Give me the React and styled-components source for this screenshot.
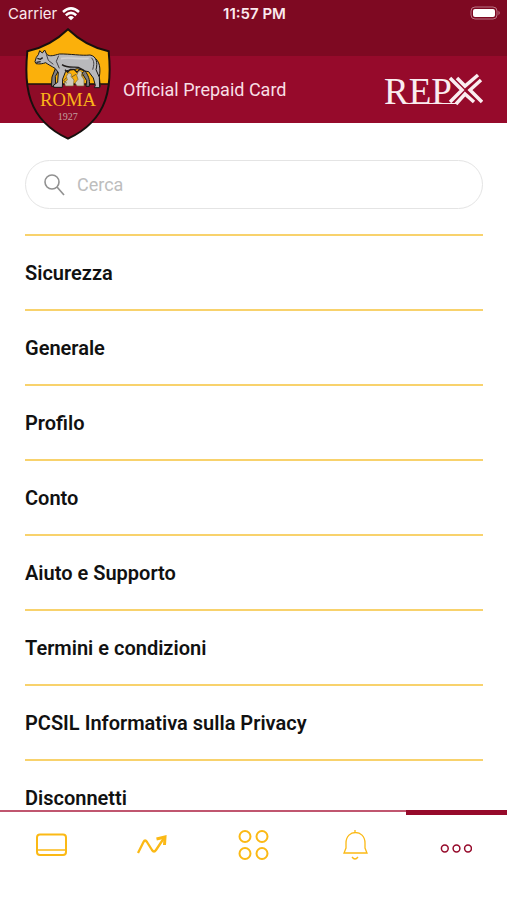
import React from "react";
import styled, { createGlobalStyle } from "styled-components";

const GlobalStyle = createGlobalStyle`
  *, *::before, *::after { box-sizing: border-box; }
  body { margin: 0; background: #fff; font-family: Roboto, "Liberation Sans", sans-serif; }
`;

const gold = "#fbb915";
const crimson = "#960a2b";

const Screen = styled.div`
  display: flex;
  flex-direction: column;
  height: 100vh;
  background: #fff;
`;

const StatusBar = styled.div`
  flex: none;
  display: grid;
  grid-template-columns: 1fr auto 1fr;
  align-items: start;
  height: 56px;
  padding: 4px 6px 4px 8px;
  background: #7e0922;
  color: #fbe9ed;
  font-family: Inter, "Liberation Sans", sans-serif;
  font-size: 15px;
  line-height: 20px;
`;

const Carrier = styled.div`
  display: flex;
  align-items: center;
  gap: 5px;
  svg { display: block; }
`;

const Clock = styled.time`
  font-weight: 600;
`;

const Battery = styled.svg`
  justify-self: end;
  display: block;
  margin-top: 2px;
`;

const Header = styled.header`
  flex: none;
  display: flex;
  align-items: center;
  height: 67px;
  padding: 0 24px 0 25px;
  background: ${crimson};
`;

const CrestSlot = styled.div`
  position: relative;
  z-index: 1;
  align-self: stretch;
  width: 98px;
`;

const Crest = styled.svg`
  position: absolute;
  top: -28px;
  left: 0;
`;

const Title = styled.h1`
  flex: 1;
  margin: 0;
  color: #f8dfe5;
  font-size: 18px;
  font-weight: 400;
  line-height: 24px;
`;

const Content = styled.main`
  flex: 1;
  min-height: 0;
  overflow-y: auto;
  scrollbar-width: none;
  padding: 37px 24px 0 25px;
`;

const SearchBox = styled.label`
  display: flex;
  align-items: center;
  gap: 12px;
  height: 49px;
  margin-bottom: 25px;
  padding: 0 18px;
  border: 1px solid #e4e4e4;
  border-radius: 25px;
  svg { flex: none; }
`;

const SearchInput = styled.input`
  flex: 1;
  min-width: 0;
  padding: 0;
  border: 0;
  outline: 0;
  background: transparent;
  color: #333;
  font-family: inherit;
  font-size: 18px;
  &::placeholder { color: #bdbdbd; opacity: 1; }
`;

const Menu = styled.ul`
  margin: 0;
  padding: 0;
  list-style: none;
`;

const MenuItem = styled.li`
  border-top: 2px solid #f8d26c;
`;

const MenuButton = styled.button`
  display: block;
  width: 100%;
  padding: 25px 0 24px;
  border: 0;
  background: none;
  color: #111;
  font-family: inherit;
  font-size: 20px;
  font-weight: 600;
  line-height: 24px;
  text-align: left;
  cursor: pointer;
`;

const TabBar = styled.nav`
  flex: none;
  display: grid;
  grid-template-columns: repeat(5, 1fr);
  height: 90px;
  border-top: 2px solid #c0566f;
`;

const Tab = styled.button`
  position: relative;
  display: flex;
  justify-content: center;
  align-items: flex-start;
  padding: 15px 0 0;
  border: 0;
  background: none;
  color: ${(p) => (p.$active ? crimson : gold)};
  cursor: pointer;
  &::before {
    content: "";
    display: ${(p) => (p.$active ? "block" : "none")};
    position: absolute;
    top: -2px;
    left: 0;
    right: 0;
    height: 5px;
    background: ${crimson};
  }
`;

function WifiIcon() {
  return (
    <svg width="18" height="14" viewBox="0 0 18 14" fill="none" stroke="#fff" strokeWidth="2.5" aria-hidden="true">
      <path d="M1 5Q9-2.2 17 5" />
      <path d="M3.8 8.2Q9 3.6 14.2 8.2" />
      <path d="M9 13.3 6 10.4Q9 7.8 12 10.4Z" fill="#fff" stroke="none" />
    </svg>
  );
}

function BatteryIcon() {
  return (
    <Battery width="31" height="14" viewBox="0 0 31 14" role="img" aria-label="Battery full">
      <rect x="1" y="1" width="26" height="12" rx="4" fill="none" stroke="#bb7485" />
      <rect x="3" y="3" width="22" height="8" rx="2" fill="#fff" />
      <path d="M28.5 4.8Q31 7 28.5 9.2Z" fill="#bb7485" />
    </Battery>
  );
}

function RomaCrest() {
  const outline = "M204 87C174 116 130 143 82 153C72 253 79 357 204 415C329 357 336 253 326 153C278 143 234 116 204 87Z";
  return (
    <Crest width="86" height="112" viewBox="75 83 258 336" role="img" aria-label="Roma 1927">
      <defs>
        <clipPath id="crest-shape"><path d={outline} /></clipPath>
      </defs>
      <g clipPath="url(#crest-shape)">
        <path fill="#fbb00b" d="M70 80H340V252H70Z" />
        <path fill="#8e0b27" d="M70 252H340V420H70Z" />
        <path stroke="#17100e" strokeWidth="4" d="M70 251H340" />
      </g>
      <path d={outline} fill="none" stroke="#17100e" strokeWidth="6" />
      <g fill="#b9b9bc" stroke="#191714" strokeWidth="3" strokeLinejoin="round">
        <path d="M281 171C300 181 302 206 298 229L301 259H290L286 224Z" />
        <path d="M180 204 166 228 167 258H154L156 230 168 200Z" fill="#817f80" />
        <path d="M105 184 109 171 115 163 119 151 127 158 134 149 140 162C150 170 162 165 178 161C208 160 246 167 270 164C289 167 294 187 288 208L298 231 299 262H283L286 255 280 233 266 214C253 213 243 207 232 205C216 211 206 207 197 213L188 236 187 261H161V254L173 246 175 216 165 204C154 197 145 193 137 187C129 190 119 192 108 190Z" />
        <path d="M255 211C264 225 271 237 268 258H258L260 241 246 218Z" fill="#817f80" />
      </g>
      <path d="M139 162 145 180 160 192M176 166 169 183 178 204M274 172C284 182 282 194 278 208" fill="none" stroke="#444145" strokeWidth="3" />
      <path d="M186 193C202 204 220 199 235 201L252 210M195 208 203 216 211 207 222 207 231 216 239 207M112 174 121 177 128 172M109 186 122 184" fill="none" stroke="#201c1a" strokeWidth="4" />
      <path d="M183 175C207 169 239 178 266 174" fill="none" stroke="#d2d1d2" strokeWidth="5" />
      <g fill="#d0cbbb" stroke="#77602e" strokeWidth="2">
        <path d="M204 219C211 216 217 221 213 228L222 239 220 257H196L193 246 202 239 199 228Z" />
        <path d="M235 213C243 209 249 216 244 224L252 238 252 257H231L225 248 234 237 230 225Z" />
        <path d="M199 232 191 241 200 248M215 230 228 222M245 227 255 220" fill="none" strokeWidth="3" />
      </g>
      <text x="204" y="317" textAnchor="middle" fill="#fbb51a" fontFamily="Liberation Serif, serif" fontSize="56">ROMA</text>
      <text x="203" y="360" textAnchor="middle" fill="#c3a1a0" fontFamily="Liberation Serif, serif" fontSize="30">1927</text>
    </Crest>
  );
}

function RepxLogo() {
  return (
    <svg width="99" height="34" viewBox="0 0 99 34" role="img" aria-label="REPX">
      <text x="0" y="31" fill="#faedf0" fontFamily="Liberation Serif, serif" fontSize="37">REP</text>
      <path d="M24 30.5H73" stroke="#faedf0" strokeWidth="1.2" />
      <g fill="none" stroke="#faedf0" strokeWidth="3.5">
        <path d="M66 5 78 17 66 29" />
        <path d="M73 5 81 13 94 2" />
        <path d="M97 7 86 17 98 29" />
        <path d="M72 31 81 21 90 29" />
      </g>
    </svg>
  );
}

function SearchIcon() {
  return (
    <svg width="21" height="22" viewBox="0 0 21 22" fill="none" stroke="#919191" strokeWidth="1.6" aria-hidden="true">
      <circle cx="8" cy="8" r="7" />
      <path d="m13 13 7 8" />
    </svg>
  );
}

function CardIcon() {
  return (
    <svg width="32" height="36" viewBox="0 0 32 36" fill="none" stroke="currentColor" strokeWidth="2" aria-hidden="true">
      <rect x="2" y="7.5" width="29" height="20.5" rx="3" />
      <path d="M3 23H30" strokeWidth="1.5" />
    </svg>
  );
}

function TrendIcon() {
  return (
    <svg width="32" height="36" viewBox="0 0 32 36" fill="none" stroke="currentColor" strokeWidth="2.3" aria-hidden="true">
      <path d="M2 26 7.5 15Q9 12 11 15L16 23Q18 26 20 23L28 11" />
      <path d="M20.5 12 29 10 28.5 18" strokeWidth="3" />
    </svg>
  );
}

function GridIcon() {
  return (
    <svg width="32" height="36" viewBox="0 0 32 36" fill="none" stroke="currentColor" strokeWidth="2" aria-hidden="true">
      <circle cx="8" cy="9.5" r="5.5" />
      <circle cx="25" cy="9.5" r="5.5" />
      <circle cx="8" cy="26.5" r="5.5" />
      <circle cx="25" cy="26.5" r="5.5" />
    </svg>
  );
}

function BellIcon() {
  return (
    <svg width="32" height="36" viewBox="0 0 32 36" fill="none" stroke="currentColor" strokeWidth="1.3" aria-hidden="true">
      <path d="M16 3V6M7 21V16C7 2 26 2 26 16V21L28 26H5Z" />
      <path d="M13 30Q16 34 19 30" />
    </svg>
  );
}

function MoreIcon() {
  return (
    <svg width="32" height="36" viewBox="0 0 32 36" fill="none" stroke="currentColor" strokeWidth="1.5" aria-hidden="true">
      <circle cx="4.8" cy="21.5" r="3.4" />
      <circle cx="16.5" cy="21.5" r="3.4" />
      <circle cx="28" cy="21.5" r="3.4" />
    </svg>
  );
}

const sections = [
  "Sicurezza",
  "Generale",
  "Profilo",
  "Conto",
  "Aiuto e Supporto",
  "Termini e condizioni",
  "PCSIL Informativa sulla Privacy",
  "Disconnetti",
];

const tabs = [
  { label: "Carta", Icon: CardIcon },
  { label: "Movimenti", Icon: TrendIcon },
  { label: "Servizi", Icon: GridIcon },
  { label: "Notifiche", Icon: BellIcon },
  { label: "Altro", Icon: MoreIcon, active: true },
];

export default function App() {
  return (
    <Screen>
      <GlobalStyle />
      <StatusBar>
        <Carrier>Carrier <WifiIcon /></Carrier>
        <Clock>11:57 PM</Clock>
        <BatteryIcon />
      </StatusBar>
      <Header>
        <CrestSlot><RomaCrest /></CrestSlot>
        <Title>Official Prepaid Card</Title>
        <RepxLogo />
      </Header>
      <Content>
        <SearchBox>
          <SearchIcon />
          <SearchInput type="search" placeholder="Cerca" aria-label="Cerca" />
        </SearchBox>
        <Menu>
          {sections.map((name) => (
            <MenuItem key={name}>
              <MenuButton type="button">{name}</MenuButton>
            </MenuItem>
          ))}
        </Menu>
      </Content>
      <TabBar>
        {tabs.map(({ label, Icon, active }) => (
          <Tab key={label} type="button" aria-label={label} aria-current={active ? "page" : undefined} $active={active}>
            <Icon />
          </Tab>
        ))}
      </TabBar>
    </Screen>
  );
}
